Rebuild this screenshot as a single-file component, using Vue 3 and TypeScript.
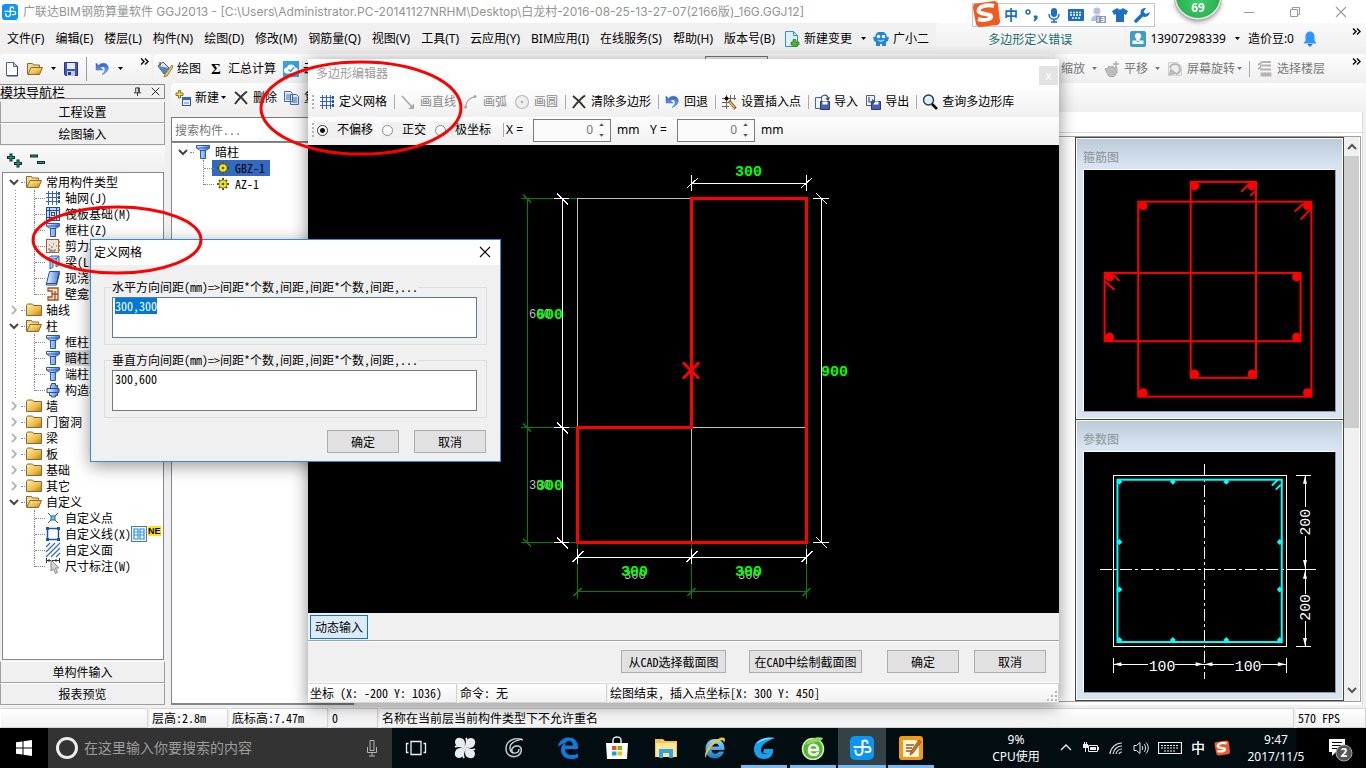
<script setup lang="ts">
import { onMounted, ref } from 'vue'

interface TreeItem { label: string; icon: string; selected?: boolean; badge?: boolean }
interface TreeGroup { label: string; open: boolean; items: TreeItem[] }
interface Tool { label: string; icon: string; disabled?: boolean; sep?: boolean }

const menus = ['文件(F)', '编辑(E)', '楼层(L)', '构件(N)', '绘图(D)', '修改(M)', '钢筋量(Q)', '视图(V)', '工具(T)', '云应用(Y)', 'BIM应用(I)', '在线服务(S)', '帮助(H)', '版本号(B)']

const groups: TreeGroup[] = [
  { label: '常用构件类型', open: true, items: [
    { label: '轴网(J)', icon: 'axis' },
    { label: '筏板基础(M)', icon: 'raft' },
    { label: '框柱(Z)', icon: 'column' },
    { label: '剪力墙(Q)', icon: 'wall' },
    { label: '梁(L)', icon: 'beam' },
    { label: '现浇板(B)', icon: 'slab' },
    { label: '壁龛', icon: 'niche' },
  ] },
  { label: '轴线', open: false, items: [] },
  { label: '柱', open: true, items: [
    { label: '框柱(Z)', icon: 'column' },
    { label: '暗柱(Z)', icon: 'column', selected: true },
    { label: '端柱(Z)', icon: 'column' },
    { label: '构造柱(Z)', icon: 'tie' },
  ] },
  { label: '墙', open: false, items: [] },
  { label: '门窗洞', open: false, items: [] },
  { label: '梁', open: false, items: [] },
  { label: '板', open: false, items: [] },
  { label: '基础', open: false, items: [] },
  { label: '其它', open: false, items: [] },
  { label: '自定义', open: true, items: [
    { label: '自定义点', icon: 'point' },
    { label: '自定义线(X)', icon: 'polyline', badge: true },
    { label: '自定义面', icon: 'area' },
    { label: '尺寸标注(W)', icon: 'dimension' },
  ] },
]

const editorTools: Tool[] = [
  { label: '定义网格', icon: 'axis', sep: true },
  { label: '画直线', icon: 'line', disabled: true },
  { label: '画弧', icon: 'arc', disabled: true },
  { label: '画圆', icon: 'circle', disabled: true, sep: true },
  { label: '清除多边形', icon: 'cross', sep: true },
  { label: '回退', icon: 'undo', sep: true },
  { label: '设置插入点', icon: 'insert', sep: true },
  { label: '导入', icon: 'import' },
  { label: '导出', icon: 'export', sep: true },
  { label: '查询多边形库', icon: 'search' },
]

const modes = ['不偏移', '正交', '极坐标']
const mode = ref('不偏移')
const offsetX = ref(0)
const offsetY = ref(0)
const horizontal = ref('300,300')
const vertical = ref('300,600')
const horizontalBox = ref<HTMLTextAreaElement | null>(null)

const gridX = [577.5, 691.5, 806.5]
const gridY = [198.5, 427.5, 542.5]

const stirrupDots: [number, number][] = [
  [1195, 185], [1253, 185], [1195, 375], [1253, 375],
  [1143, 205], [1309, 205], [1143, 394], [1309, 394],
  [1109, 277], [1298, 277], [1109, 338], [1298, 338],
]
const barMarks: [number, number][] = [
  [1119, 481], [1173, 481], [1227, 481], [1119, 641], [1173, 641], [1227, 641], [1281, 641],
  [1119, 542], [1119, 590], [1281, 542], [1281, 590],
]

const pinned = [
  { name: '任务视图', icon: 'taskview', state: '' },
  { name: '风扇', icon: 'fan', state: '' },
  { name: '漩涡', icon: 'swirl', state: '' },
  { name: 'Edge', icon: 'edge', state: 'apart' },
  { name: '应用商店', icon: 'store', state: '' },
  { name: '文件资源管理器', icon: 'explorer', state: '' },
  { name: 'Internet Explorer', icon: 'ie', state: '' },
  { name: '广联达', icon: 'gcloud', state: 'running' },
  { name: '浏览器', icon: 'browser', state: 'running' },
  { name: '钢筋算量', icon: 'rebar', state: 'active' },
  { name: '记事', icon: 'notes', state: 'running' },
]

onMounted(() => {
  horizontalBox.value?.focus()
  horizontalBox.value?.select()
})
</script>

<template>
  <div class="desktop">
    <svg class="defs" width="0" height="0" aria-hidden="true">
      <defs>
        <linearGradient id="gFolder" x1="0" y1="0" x2="1" y2="1"><stop offset="0" stop-color="#fff0b0" /><stop offset=".6" stop-color="#eebb4a" /><stop offset="1" stop-color="#b97a14" /></linearGradient>
        <linearGradient id="gBlue" x1="0" y1="0" x2="1" y2="0"><stop offset="0" stop-color="#f4f9ff" /><stop offset="1" stop-color="#3c78d8" /></linearGradient>
        <linearGradient id="gUndo" x1="0" y1="0" x2="0" y2="1"><stop offset="0" stop-color="#2a5fc4" /><stop offset="1" stop-color="#8ab8f4" /></linearGradient>
        <radialGradient id="gBall" cx=".5" cy=".6" r=".6"><stop offset="0" stop-color="#3ed06a" /><stop offset="1" stop-color="#25a548" /></radialGradient>
        <linearGradient id="gIe" x1="0" y1="0" x2="0" y2="1"><stop offset="0" stop-color="#8fdcff" /><stop offset="1" stop-color="#1477c8" /></linearGradient>
      </defs>
      <symbol id="rebar" viewBox="0 0 24 24"><rect width="24" height="24" rx="5" fill="#0a96f5" /><path d="M12.500 5v10.500a3.500 3.500 0 0 1-7 0v-1M4.500 11h13.500a2.500 2.500 0 0 1 0 5h-2.500M12.500 7a2.500 2.500 0 0 1 5 0" fill="none" stroke="#fff" stroke-width="2" stroke-linecap="round" /></symbol>
      <symbol id="newfile" viewBox="0 0 16 16"><path d="M2.500 1.500h7l4 4v9h-11z" fill="#fff" stroke="#4a6488" /><path d="M9.500 1.500v4h4z" fill="#bcd2ee" stroke="#4a6488" /><path d="M13.500 6v9H3" fill="none" stroke="#30486c" /></symbol>
      <symbol id="folder" viewBox="0 0 16 16"><path d="M.5 3.500l1-1.500h5l1 1.500h8v10H.5z" fill="url(#gFolder)" stroke="#8a6b2c" /></symbol>
      <symbol id="folderopen" viewBox="0 0 16 16"><path d="M.5 13V2.500h5l1 1.500h6V6" fill="#f6d98a" stroke="#8a6b2c" /><path d="M.8 13.500L4 6.500h11.500l-3 7z" fill="url(#gFolder)" stroke="#8a6b2c" /></symbol>
      <symbol id="save" viewBox="0 0 16 16"><path d="M1.500 1.500h13v13h-12l-1-1z" fill="#4355b8" stroke="#26348c" /><rect x="4" y="2" width="8" height="6" fill="#e4e9fa" /><rect x="4" y="10" width="8" height="5" fill="#c2cae8" /><rect x="5" y="11" width="3" height="3" fill="#26348c" /></symbol>
      <symbol id="undo" viewBox="0 0 16 16"><path d="M2 2v7h7L6.500 6.800C8.500 5 11 5.500 11 8.200c0 2-1.200 3.800-3 5.300 4.500-1.500 6.500-4.200 6.300-7C14 2 8 .5 4.500 4.600z" fill="url(#gUndo)" stroke="#3a6cc4" stroke-width=".5" /></symbol>
      <symbol id="paint" viewBox="0 0 16 16"><path d="M1 5l5-4 6 6-5 6z" fill="#dfe8f2" stroke="#3d4e66" /><path d="M1 5l11 2-5 6z" fill="#5087c6" /><path d="M15 4L8 13l-1 3 3-1 6-9z" fill="#f1c550" stroke="#6f582b" stroke-width=".7" /><path d="M3 1v4" stroke="#26384c" /></symbol>
      <symbol id="cloud" viewBox="0 0 16 16"><rect width="16" height="16" fill="#35a1e3" /><path d="M4 12.500a3 3 0 0 1 0-6 4.200 4.200 0 0 1 8 0 3 3 0 0 1 0 6z" fill="#fff" /><path d="M5.500 8.500l2 2 3.500-4" fill="none" stroke="#35a1e3" stroke-width="1.500" /></symbol>
      <symbol id="axis" viewBox="0 0 16 16"><path d="M1 3.500h14M1 7.500h14M1 11.500h14M3.500 1v14M7.500 1v14M11.500 1v14" stroke="#3464bd" shape-rendering="crispEdges" /><path d="M13 3.500h2M13 7.500h2M13 11.500h2" stroke="#2a58b0" stroke-width="3" stroke-dasharray="2 1" /></symbol>
      <symbol id="raft" viewBox="0 0 16 16"><rect x="1.500" y="1.500" width="13" height="13" fill="#c7dbf6" stroke="#1d4f93" /><path d="M1 4.500h14M1 11.500h14M4.500 1v14M11.500 1v14" stroke="#1d4f93" /><rect x="6.500" y="6.500" width="3" height="3" fill="#fff" stroke="#1d4f93" /></symbol>
      <symbol id="column" viewBox="0 0 16 16"><path d="M1.500 1.500h13V4l-3 2h-1v8.500h-5V6h-1l-3-2z" fill="url(#gBlue)" stroke="#2358b8" /><path d="M1.500 4h13M5 6.500h6" stroke="#2358b8" /></symbol>
      <symbol id="wall" viewBox="0 0 16 16"><rect x="1.500" y="1.500" width="12" height="13" fill="#eee4de" stroke="#a35d35" /><path d="M3 11h2M6 9h2M9 12h2M4 7h1M8 6h1M11 8h1M4 13h6M5 12h2" stroke="#6e6058" /><path d="M13 4h2M13 8h2M13 12h2" stroke="#c26f2c" stroke-width="2" /></symbol>
      <symbol id="beam" viewBox="0 0 16 16"><path d="M2 5l4-3h8l-3 3zM5 6v9l3-2V6M11 5v8l3-2V2" fill="#a9cdf4" stroke="#2b68b7" /></symbol>
      <symbol id="slab" viewBox="0 0 16 16"><path d="M4.500 1.500h10l-3 12h-10z" fill="url(#gBlue)" stroke="#1d51a9" /><path d="M1.500 13.500v1.500h10l3-12" fill="none" stroke="#16407f" /></symbol>
      <symbol id="niche" viewBox="0 0 16 16"><path d="M3 2h10v12H3v-3h4V5H3zM7 8h6M10 5v9" fill="#f5dec8" stroke="#a15423" stroke-width="1.300" /></symbol>
      <symbol id="tie" viewBox="0 0 16 16"><path d="M5.500 3.500h1v-2h4v2h2v3h1.500v4h-1.500v3h-2v1.500h-4v-1.500h-2v-3H2v-4h3.500z" fill="url(#gBlue)" stroke="#254d91" /><path d="M5 6.500h7M5 10.500h7" stroke="#254d91" /></symbol>
      <symbol id="point" viewBox="0 0 16 16"><path d="M3 3l10 10M13 3L3 13" stroke="#1c5fae" /><rect x="6" y="6" width="4" height="4" fill="#8bc0f0" stroke="#1c5fae" /></symbol>
      <symbol id="polyline" viewBox="0 0 16 16"><rect x="2.500" y="2.500" width="11" height="11" fill="none" stroke="#1b55ad" stroke-width="1.500" /><path d="M1 1h3v3H1zM12 1h3v3h-3zM1 12h3v3H1zM12 12h3v3h-3z" fill="#1b55ad" /></symbol>
      <symbol id="area" viewBox="0 0 16 16"><path d="M1 5l4-4M1 10l9-9M1 15L15 1M6 15l9-9M11 15l4-4" stroke="#3169c8" stroke-width="1.200" /></symbol>
      <symbol id="dimension" viewBox="0 0 16 16"><path d="M1 2.500h14M1.500 0v5M14.500 0v5M4 1v3M11 1v3" stroke="#333" /><path d="M6 2v11l2.500-2 2 4.500 2-1-2-4.500h3.500z" fill="#d4d4d4" stroke="#888" /></symbol>
      <symbol id="gear" viewBox="0 0 12 12"><path d="M6 0v12M0 6h12M2 2l8 8M10 2l-8 8" stroke="#5d5600" stroke-width="2" /><circle cx="6" cy="6" r="4" fill="#f3e522" stroke="#6e6600" stroke-width=".6" /><circle cx="6" cy="6" r="1.300" fill="#504a00" /></symbol>
      <symbol id="line" viewBox="0 0 16 16"><path d="M2 2l10 11" stroke="#a6a6a6" stroke-width="1.500" /><path d="M14 15V9.500L8.500 15z" fill="#a6a6a6" /></symbol>
      <symbol id="arc" viewBox="0 0 16 16"><path d="M2.500 13C3 8 6 4 12 2.500" fill="none" stroke="#a6a6a6" stroke-width="1.200" /><circle cx="2.500" cy="13" r="1.500" fill="#a6a6a6" /><circle cx="12" cy="2.500" r="1.500" fill="#a6a6a6" /></symbol>
      <symbol id="circle" viewBox="0 0 16 16"><circle cx="8" cy="8" r="6.500" fill="#eee" stroke="#bbb" stroke-width="1.200" /><circle cx="8" cy="8" r="1.200" fill="#aaa" /></symbol>
      <symbol id="cross" viewBox="0 0 16 16"><path d="M2 2c4 3 8 7 12 12M14 1.500C9 5 5 10 2 14" stroke="#333" stroke-width="2" fill="none" /></symbol>
      <symbol id="insert" viewBox="0 0 16 16"><path d="M1 4.500h14M1 8.500h9M5.500 1v14M9.500 1v7M13.500 1v5M1 12.500h7" stroke="#666" /><circle cx="5.500" cy="4.500" r="2" fill="#111" /><path d="M8 7l6.500 7.500" stroke="#8f5524" stroke-width="3" /><path d="M8.500 8l5 5.500" stroke="#f2c466" stroke-width="1.300" /></symbol>
      <symbol id="import" viewBox="0 0 16 16"><path d="M1.500 3.500h6v11h-6z" fill="#edf4fd" stroke="#46648d" /><path d="M6.500 7.500h9v8h-9z" fill="#4760b6" stroke="#29387f" /><path d="M8.500 7.500h5v3h-5z" fill="#fff" /><path d="M7 4c1-3 5-4 7-1v3M12 4l2 2 1.500-2.500" fill="none" stroke="#364e75" stroke-width="1.200" /></symbol>
      <symbol id="export" viewBox="0 0 16 16"><path d="M1.500 1.500h8v10h-8z" fill="#edf4fd" stroke="#46648d" /><path d="M6.500 7.500h9v8h-9z" fill="#4760b6" stroke="#29387f" /><path d="M8.500 7.500h5v3h-5z" fill="#fff" /><path d="M4 3v5h5M7 5.500L9.500 8 7 10" fill="none" stroke="#364e75" stroke-width="1.200" /></symbol>
      <symbol id="search" viewBox="0 0 16 16"><circle cx="6.500" cy="6" r="5" fill="#d6effb" stroke="#2c3c48" stroke-width="1.400" /><path d="M4 5a3 3 0 0 1 3-2" stroke="#fff" fill="none" /><path d="M10 10l5 5" stroke="#111" stroke-width="2.600" /></symbol>
      <symbol id="hand" viewBox="0 0 16 16"><path d="M1 8l3-1 1-2 2 1 2-1 1 2 2-1 1 2v4l-3 3.500H5L3 12z" fill="#bdbdbd" stroke="#a8a8a8" /><path d="M12 0v7M9 3h6" stroke="#aaa" stroke-width="1.300" /></symbol>
      <symbol id="rotate" viewBox="0 0 16 16"><path d="M1.500 1.500h9l4 4v9h-13z" fill="#ededed" stroke="#d0d0d0" /><path d="M3 7a5 5 0 1 1 6 6M3 13l1-4 4 3z" fill="none" stroke="#b4b4b4" stroke-width="1.800" /></symbol>
      <symbol id="floors" viewBox="0 0 16 16"><path d="M1 4l4-3h9M3 4.500h11M1 8l3-2M3 8.500h11M4.500 12.500h9v2h-9z" fill="none" stroke="#b4b4b4" stroke-width="1.800" /></symbol>
      <symbol id="newcomp" viewBox="0 0 16 16"><path d="M3.500 .5h2v2.500h2.500v2.500h-2.500v2.500h-2V5.500H1V3h2.500z" fill="#f3da3c" stroke="#83742a" /><rect x="7.500" y="7.500" width="8" height="8" fill="#e9f2ff" stroke="#2a56a6" /><path d="M7 7h9v3H7z" fill="#2f67c9" /><path d="M9 13h5" stroke="#5d87cc" /></symbol>
      <symbol id="copy" viewBox="0 0 16 16"><path d="M.500 1.500h6l2 2v8h-8zM6.500 4.500h6l2 2v8h-8z" fill="#e2edfb" stroke="#3e6aae" /><path d="M2 5h4M2 7h4M2 9h4M8 8h5M8 10h5M8 12h5" stroke="#3e6aae" /></symbol>
      <symbol id="fileplus" viewBox="0 0 16 16"><path d="M1.500.5h8l4 4v11h-12z" fill="#dff0fd" stroke="#3b8ec9" /><path d="M9.500.500v4h4" fill="none" stroke="#3b8ec9" /><path d="M9 8.500h3v2.500h3v3h-3v2H9v-2H7v-3h2z" fill="#4db31e" stroke="#2d7d0c" stroke-width=".7" /></symbol>
      <symbol id="robot" viewBox="0 0 16 16"><path d="M3 3l2-2h6l2 2 1 3h2l-1 4-2 1v4H9v-2H7v2H3v-4l-2-1L0 6h2z" fill="#2088dc" /><circle cx="5.500" cy="5.500" r="1.700" fill="#fff" /><circle cx="10.500" cy="5.500" r="1.700" fill="#fff" /><path d="M5 9c2 1.500 4 1.500 6 0" stroke="#fff" fill="none" /></symbol>
      <symbol id="user" viewBox="0 0 16 16"><rect width="16" height="16" rx="2" fill="#3f9cc9" /><path d="M8 2a3 3 0 0 1 2.500 5L9 9.500h4.500V13h-11V9.500H7L5.500 7A3 3 0 0 1 8 2z" fill="#fff" /><path d="M6.500 10l1.500 1.500L9.500 10z" fill="#3f9cc9" /></symbol>
      <symbol id="bell" viewBox="0 0 16 16"><path d="M8 .5c3 0 4.500 2.500 4.500 5v4l2 3h-13l2-3v-4c0-2.500 1.500-5 4.500-5z" fill="#3294ff" /><path d="M6 13.500h4l-2 2z" fill="#3294ff" stroke="#2274ce" /></symbol>
      <symbol id="sogou" viewBox="0 0 28 28"><path d="M2 4l20-3q3 0 4 3l2 17q0 3-3 4L8 27q-3 0-4-3L1 8q0-3 1-4z" fill="#f25a21" /><path d="M22 6q-7-2-13 1-5 4 0 6l9 2q3 2-1 4-5 2-11 0" fill="none" stroke="#fff" stroke-width="4" /></symbol>
      <symbol id="pin" viewBox="0 0 10 10"><path d="M3 1v5M7 1v5M3 1h4M1 6.500h8M5 6v4M6 1v5" stroke="#222" fill="none" /></symbol>
      <symbol id="close" viewBox="0 0 12 12"><path d="M1 1l10 10M11 1L1 11" stroke="currentColor" stroke-width="1.100" /></symbol>
      <symbol id="chevdown" viewBox="0 0 10 10"><path d="M1 3l4 4 4-4" fill="none" stroke="currentColor" stroke-width="2" /></symbol>
      <symbol id="chevright" viewBox="0 0 10 10"><path d="M3 1l4 4-4 4" fill="none" stroke="#a6a6a6" stroke-width="1.500" /></symbol>
      <symbol id="more" viewBox="0 0 9 7"><path d="M1 .5l3 3-3 3M5 .5l3 3-3 3" fill="none" stroke="#111" stroke-width="1.500" /></symbol>
      <symbol id="table" viewBox="0 0 16 16"><rect x=".5" y=".5" width="15" height="15" fill="#e9f7ff" stroke="#66757e" /><path d="M3 3h4v10H3zM9 3h4v10H9zM3 6h4M3 9h4M9 6h4M9 9h4" fill="#fff" stroke="#2b8fdf" stroke-width="1.200" /></symbol>
      <symbol id="taskview" viewBox="0 0 24 24"><path d="M7 5.500h10v13H7zM4.500 7.500h-2v9h2M19.500 7.500h2v9h-2" fill="none" stroke="#eee" stroke-width="1.300" /></symbol>
      <symbol id="fan" viewBox="0 0 24 24"><g fill="#e8ecec"><path id="blade" d="M11.500 11C6 11.500 2 10 2 6s4-5 7-3.500 3.500 4 2.500 8.500z" /><use href="#blade" transform="rotate(90 12 12)" /><use href="#blade" transform="rotate(180 12 12)" /><use href="#blade" transform="rotate(270 12 12)" /></g><path d="M12 12C8 10 5 9 2 11M12 12c2-4 3-7 1-10M12 12c4 2 7 3 10 1M12 12c-2 4-3 7-1 10" fill="none" stroke="#e8ecec" stroke-width="2" /></symbol>
      <symbol id="swirl" viewBox="0 0 24 24"><path d="M21 4C13 1 4 4 4 13c0 6 6 9 11 7s6-9 1-10-8 4-5 7" fill="none" stroke="#b9c3c6" stroke-width="1.600" /><path d="M20 3C13 5 7 7 8 13c1 6 9 5 9 0" fill="none" stroke="#dce2e4" stroke-width="1.300" /></symbol>
      <symbol id="edge" viewBox="0 0 24 24"><path d="M2 11C3 4 8 1.500 13 1.500c6 0 9.500 4.500 9 11.500H9c0 4 3 6 7 6 2 0 4-.5 6-1.500v4c-2 1-4.500 1.500-7 1.500-6 0-10-4-10-9 0-3 1.500-5.500 4-7-2 .5-5 2-7 4zM9 9.500h8c0-3-1.500-4.500-4-4.500s-4 2-4 4.500z" fill="#0a7cdf" fill-rule="evenodd" /></symbol>
      <symbol id="store" viewBox="0 0 24 24"><path d="M1 7h22l-1 16H2z" fill="#fff" /><path d="M8 7V4a4 3 0 0 1 8 0v3" fill="none" stroke="#e8e8e8" stroke-width="1.500" /><path d="M7 10h4.500v4H7z" fill="#f25022" /><path d="M12.500 10H17v4h-4.500z" fill="#7fba00" /><path d="M7 15.500h4.500v4H7z" fill="#00a4ef" /><path d="M12.500 15.500H17v4h-4.500z" fill="#ffb900" /></symbol>
      <symbol id="explorer" viewBox="0 0 24 24"><path d="M1 3h8l2 2h12v16H1z" fill="#f5c44f" /><path d="M2 7h20v14H2z" fill="#fde796" /><path d="M5 13h14v9h-4v-5H9v5H5z" fill="#30a5de" /></symbol>
      <symbol id="ie" viewBox="0 0 24 24"><path d="M12 3c6 0 10 4 9.500 11H8.500c.5 4 5.500 5 7.500 1.500h5C19 21 15 22.500 12 22.500c-6 0-9.500-4-9.500-9.500S6 3 12 3zM8.500 10.500h7.500c-.5-4-7-4-7.500 0z" fill="url(#gIe)" fill-rule="evenodd" /><path d="M3 22C-1 18 8 5 17 2c5-1.500 6 1 4 5 0-4-3-3-7-1C8 10 3 17 3 22z" fill="#f4c62c" /></symbol>
      <symbol id="gcloud" viewBox="0 0 24 24"><path d="M23 2C13 0 2 4 2 13c0 6 4 10 10 10s10-4 9-10h-9l-1 4h4c-2 2-6 1-6-3 0-6 7-9 14-12z" fill="#18a2ee" /><path d="M4 8C8 2 16 1 23 2c-8 1-14 3-19 6z" fill="#7dd8ff" /></symbol>
      <symbol id="browser" viewBox="0 0 24 24"><circle cx="12" cy="13" r="10.500" fill="#57b82e" stroke="#d6efc8" stroke-width="1.500" /><path d="M17 16c-1 4-9 4-9-2 0-7 9-7 9 0H8" fill="none" stroke="#fff" stroke-width="2.600" /><path d="M4 9C9 2 17 0 22 2c-1 4-7 3-18 7z" fill="#8ddd55" /></symbol>
      <symbol id="notes" viewBox="0 0 24 24"><rect width="24" height="24" rx="3" fill="#f39a13" /><path d="M4 4h13l3 3v14H4z" fill="#fff4d8" /><path d="M7 9h8M7 12h6M7 15h5" stroke="#8c5b27" stroke-width="1.500" /><path d="M20 4L12 15l-1 4 3-2 8-11z" fill="#c8722b" stroke="#774313" stroke-width=".7" /></symbol>
    </svg>

    <main class="app">
      <header class="titlebar">
        <svg class="logo"><use href="#rebar" /></svg>
        <h1>广联达BIM钢筋算量软件 GGJ2013 - [C:\Users\Administrator.PC-20141127NRHM\Desktop\白龙村-2016-08-25-13-27-07(2166版)_16G.GGJ12]</h1>
        <div class="wincontrols">
          <button aria-label="最小化"><svg viewBox="0 0 12 12"><path d="M1 6.500h10" stroke="#999" /></svg></button>
          <button aria-label="还原"><svg viewBox="0 0 12 12"><path d="M1.500 3.500h7v7h-7zM3.500 3V1.500h7v7H9" fill="none" stroke="#999" /></svg></button>
          <button aria-label="关闭"><svg><use href="#close" /></svg></button>
        </div>
      </header>

      <nav class="menubar">
        <button v-for="m in menus" :key="m">{{ m }}</button>
        <button class="withicon changes"><svg><use href="#fileplus" /></svg>新建变更<i class="caret"></i></button>
        <button class="withicon assistant"><svg><use href="#robot" /></svg>广小二</button>
        <p class="notice song">多边形定义错误</p>
        <div class="account">
          <button class="withicon"><svg><use href="#user" /></svg>13907298339<i class="caret"></i></button>
          <span>造价豆:0</span>
          <svg class="ic"><use href="#bell" /></svg>
          <svg class="more"><use href="#more" /></svg>
        </div>
      </nav>

      <div class="toolrow">
        <div class="toolbar files">
          <button aria-label="新建"><svg><use href="#newfile" /></svg></button>
          <button aria-label="打开"><svg><use href="#folderopen" /></svg><i class="caret"></i></button>
          <button aria-label="保存"><svg><use href="#save" /></svg></button>
          <i class="vline"></i>
          <button aria-label="撤销"><svg><use href="#undo" /></svg><i class="caret wide"></i></button>
          <svg class="more"><use href="#more" /></svg>
        </div>
        <div class="toolbar draw">
          <button><svg><use href="#paint" /></svg>绘图</button>
          <button><b class="sigma">Σ</b>汇总计算</button>
          <button><svg><use href="#cloud" /></svg>云检查</button>
          <select class="floor" aria-label="楼层"><option></option></select>
        </div>
        <div class="toolbar view">
          <button disabled>缩放<i class="caret"></i></button>
          <button disabled><svg><use href="#hand" /></svg>平移<i class="caret"></i></button>
          <button disabled><svg><use href="#rotate" /></svg>屏幕旋转<i class="caret near"></i></button>
          <i class="vline"></i>
          <button disabled><svg><use href="#floors" /></svg>选择楼层</button>
          <svg class="more"><use href="#more" /></svg>
        </div>
      </div>

      <div class="workspace">
        <aside class="navigator song">
          <header><span>模块导航栏</span><svg><use href="#pin" /></svg><svg><use href="#close" /></svg></header>
          <button class="section">工程设置</button>
          <button class="section">绘图输入</button>
          <div class="expander">
            <svg viewBox="0 0 40 16"><path d="M1 5.500h8M5 1.500v8M8 11.500h8M12 7.500v8M24 4h8M31 10.500h8" stroke="#0a2e2b" stroke-width="3" /><path d="M2 5.500h6M5 2.500v6M9 11.500h6M12 8.500v6M25 4h6M32 10.500h6" stroke="#21998f" stroke-width="1.200" /></svg>
          </div>
          <ul class="tree">
            <li v-for="g in groups" :key="g.label">
              <div class="row">
                <svg class="tog"><use :href="g.open ? '#chevdown' : '#chevright'" /></svg>
                <i class="dots"></i>
                <svg class="ic"><use :href="g.open ? '#folderopen' : '#folder'" /></svg>
                <span>{{ g.label }}</span>
              </div>
              <ul v-if="g.items.length" :class="{ tail: g.label === '自定义' }">
                <li v-for="c in g.items" :key="c.label" class="row child">
                  <i class="branch"></i>
                  <svg class="ic"><use :href="'#' + c.icon" /></svg>
                  <span :class="{ chosen: c.selected }">{{ c.label }}</span>
                  <template v-if="c.badge"><svg class="ic"><use href="#table" /></svg><b class="new">NE</b></template>
                </li>
              </ul>
            </li>
          </ul>
          <button class="section">单构件输入</button>
          <button class="section">报表预览</button>
        </aside>

        <section class="stage">
          <div class="toolbar comps">
            <button><svg><use href="#newcomp" /></svg>新建<i class="caret near"></i></button>
            <button><svg><use href="#cross" /></svg>删除</button>
            <button><svg><use href="#copy" /></svg>复制</button>
          </div>
          <div class="panes">
            <div class="components song">
              <input type="search" placeholder="搜索构件..." aria-label="搜索构件" />
              <ul class="tree">
                <li>
                  <div class="row"><svg class="tog"><use href="#chevdown" /></svg><i class="dots"></i><svg class="ic"><use href="#column" /></svg><span>暗柱</span></div>
                  <ul class="tail">
                    <li class="row child"><i class="branch"></i><span class="hot"><svg class="mini"><use href="#gear" /></svg>GBZ-1</span></li>
                    <li class="row child"><i class="branch"></i><span class="hotless"><svg class="mini"><use href="#gear" /></svg>AZ-1</span></li>
                  </ul>
                </li>
              </ul>
            </div>
            <div class="preview">
              <div class="dock">
                <div class="figures">
                  <figure>
                    <figcaption>箍筋图</figcaption>
                    <svg viewBox="1084 169 252 243">
                      <g fill="none" stroke="#f00" stroke-width="2">
                        <rect x="1191" y="181" width="66" height="198" />
                        <rect x="1138" y="201" width="175" height="197" />
                        <rect x="1104" y="273" width="198" height="69" />
                        <path d="M1242 191l8-8M1251 195l6-5M1296 211l9-8M1302 219l11-11M1119 281l-6-6M1114 290l-9-8" />
                      </g>
                      <circle v-for="(d, i) in stirrupDots" :key="i" :cx="d[0]" :cy="d[1]" r="4.500" fill="#f00" />
                    </svg>
                  </figure>
                  <figure>
                    <figcaption>参数图</figcaption>
                    <svg viewBox="1084 451 252 243">
                      <g fill="none" stroke="#fff" shape-rendering="crispEdges">
                        <rect x="1112.500" y="474.500" width="175" height="173" />
                        <path d="M1204.500 463v217M1099 569.500h219" stroke-dasharray="12 3 3 3" />
                        <path d="M1112.500 659v15M1287.500 659v15M1112 665.500h36M1175 665.500h60M1262 665.500h25" />
                        <path d="M1297 474.500h16M1297 647.500h16M1299 569.500h14M1306.500 475v32M1306.500 536v58M1306.500 622v25" />
                      </g>
                      <path d="M1113 665.500l8-2v4zM1204 665.500l-8-2v4zM1205 665.500l8-2v4zM1287 665.500l-8-2v4zM1306.500 475l-2 8h4zM1306.500 568l-2-8h4zM1306.500 571l-2 8h4zM1306.500 647l-2-8h4z" fill="#fff" />
                      <rect x="1117" y="479" width="166" height="164" fill="none" stroke="#0ff" stroke-width="2" />
                      <path d="M1273 485l6-6M1277 489l5-5" stroke="#0ff" stroke-width="2" />
                      <path v-for="(d, i) in barMarks" :key="i" :d="`M${d[0]} ${d[1] - 3}l3 3-3 3-3-3z`" fill="#0ff" />
                      <g class="dimtext" fill="#fff" text-anchor="middle">
                        <text x="1162" y="672">100</text>
                        <text x="1249" y="672">100</text>
                        <text transform="translate(1312 522) rotate(-90)">200</text>
                        <text transform="translate(1312 608) rotate(-90)">200</text>
                      </g>
                    </svg>
                  </figure>
                </div>
                <div class="scroll"><svg class="up"><use href="#chevdown" /></svg><i></i><svg><use href="#chevdown" /></svg></div>
              </div>
            </div>
          </div>
        </section>
      </div>

      <footer class="status song">
        <span class="c1"></span><span class="c2">层高:2.8m</span><span class="c3">底标高:7.47m</span><span class="c4">0</span><span class="c5">名称在当前层当前构件类型下不允许重名</span><span class="c6">570 FPS</span>
      </footer>
    </main>

    <footer class="taskbar">
      <button class="start" aria-label="开始"><svg viewBox="0 0 16 16"><path d="M0 2.300L6.500 1.400v6.100H0zM7.500 1.200L16 0v7.500H7.500zM0 8.500h6.500v6.100L0 13.700zM7.500 8.500H16V16l-8.500-1.200z" fill="#fff" /></svg></button>
      <label class="cortana">
        <i class="ring"></i>
        <input type="text" placeholder="在这里输入你要搜索的内容" aria-label="搜索" />
        <svg viewBox="0 0 12 18"><path d="M4 1.500h4v10H4zM1.500 8v5.500h9V8M6 14v3M3 17h6" fill="none" stroke="#b5b5b5" /></svg>
      </label>
      <div class="pins">
        <button v-for="p in pinned" :key="p.icon" :class="p.state" :aria-label="p.name"><svg><use :href="'#' + p.icon" /></svg></button>
      </div>
      <div class="cpu"><span>9%</span><span>CPU使用</span></div>
      <div class="tray">
        <svg viewBox="0 0 16 16"><path d="M3 10l5-5 5 5" fill="none" stroke="#eee" stroke-width="1.300" /></svg>
        <svg viewBox="0 0 16 16"><path d="M5.500 5.500h9v6h-9z" fill="none" stroke="#eee" /><path d="M7 7h6v3H7zM15 7h1v3h-1zM0 4h5v4H3v4H2V8H0zM1 2h1v2H1zM3 2h1v2H3z" fill="#eee" /></svg>
        <svg viewBox="0 0 16 16"><path d="M2 14A12 12 0 0 1 14 3M5 14a9 9 0 0 1 9-8M8 14a6 6 0 0 1 6-5M11 14a3 3 0 0 1 3-2" fill="none" stroke="#ddd" stroke-width="1.200" /></svg>
        <svg viewBox="0 0 16 16"><path d="M1 5.500h2.500L7 2.500v11l-3.500-3H1zM9 6c1 1 1 3 0 4M11 4c2 2 2 6 0 8M13 2.500c3 3 3 8 0 11" fill="none" stroke="#eee" /></svg>
        <svg class="kb" viewBox="0 0 24 16"><path d="M.500 2.500h23v11H.500z" fill="none" stroke="#eee" stroke-width="1.200" /><path d="M3 5.500h18M3 8h18M6 11h12" stroke="#eee" stroke-width="1.200" stroke-dasharray="2 1" /></svg>
        <b>中</b>
        <svg><use href="#sogou" /></svg>
      </div>
      <time class="clock"><span>9:47</span><span>2017/11/5</span></time>
      <button class="center" aria-label="通知"><svg viewBox="0 0 26 26"><path d="M2 3h16v13H9l-4 4v-4H2z" fill="#fff" /><path d="M5 6.500h10M5 9.500h10M5 12.500h6" stroke="#000" /><circle cx="17" cy="17" r="8" fill="#555" stroke="#aaa" /><text x="17" y="21" text-anchor="middle" fill="#fff" class="count">2</text></svg></button>
    </footer>

    <section class="editor" aria-label="多边形编辑器">
      <header><h2>多边形编辑器</h2><button aria-label="关闭">x</button></header>
      <div class="etools">
        <i class="grip"></i>
        <template v-for="t in editorTools" :key="t.label">
          <button :disabled="t.disabled"><svg><use :href="'#' + t.icon" /></svg>{{ t.label }}</button>
          <i v-if="t.sep" class="esep"></i>
        </template>
      </div>
      <div class="etools offsets">
        <i class="grip"></i>
        <label v-for="m in modes" :key="m" class="radio"><input v-model="mode" type="radio" name="mode" :value="m" /><span>{{ m }}</span></label>
        <i class="esep"></i>
        <label for="offx">X =</label>
        <div class="spin"><input id="offx" v-model="offsetX" type="text" /><span><button aria-label="增加X" @click="offsetX++"></button><button aria-label="减少X" @click="offsetX--"></button></span></div>
        <em>mm</em>
        <label for="offy">Y =</label>
        <div class="spin"><input id="offy" v-model="offsetY" type="text" /><span><button aria-label="增加Y" @click="offsetY++"></button><button aria-label="减少Y" @click="offsetY--"></button></span></div>
        <em>mm</em>
      </div>
      <svg class="canvas" viewBox="308 145 751 468">
        <g fill="none" shape-rendering="crispEdges">
          <g stroke="#008000">
            <path d="M527.500 198v345M577 591.500h230" />
            <path v-for="y in gridY" :key="'a' + y" :d="`M521 ${y}h56M523 ${y - 4}l8 8`" />
            <path v-for="x in gridX" :key="'b' + x" :d="`M${x} 542v57M${x - 4} 596l8-8`" />
          </g>
          <path d="M577.500 427V198.500H691M691.500 427v115M691 427.500h115" stroke="#c0c0c0" />
          <g stroke="#fff">
            <path d="M562.500 198v345M577 557.500h230M691 183.500h116M821.500 198v345" />
            <path v-for="y in gridY" :key="'c' + y" :d="`M554 ${y}h15M557 ${y - 5}l11 11`" />
            <path v-for="x in gridX" :key="'d' + x" :d="`M${x} 549v15M${x - 5} 562l11-11`" />
            <path d="M691.500 175v16M806.500 175v16M687 188l11-10M801 188l11-10M813 198.500h16M816 193l11 11M813 542.500h16M816 537l11 11" />
          </g>
          <path d="M691.500 198.500h115v344h-229v-115h114z" stroke="#f00" stroke-width="3" />
        </g>
        <path d="M683 362.500l16 16M699 362.500l-16 16" stroke="#f00" stroke-width="3" />
        <g class="small" fill="#c0c0c0">
          <text x="529" y="318">600</text><text x="529" y="489">300</text>
          <text x="624" y="579">300</text><text x="738" y="579">300</text>
        </g>
        <g class="big" fill="#0f0">
          <text x="735" y="176">300</text><text x="536" y="319">600</text><text x="536" y="490">300</text>
          <text x="821" y="376">900</text><text x="621" y="576">300</text><text x="735" y="576">300</text>
        </g>
      </svg>
      <div class="dynamic song"><button>动态输入</button></div>
      <div class="actions song"><button class="w105">从CAD选择截面图</button><button class="w113">在CAD中绘制截面图</button><button>确定</button><button>取消</button></div>
      <footer class="estatus song"><span>坐标 (X: -200 Y: 1036)</span><span>命令: 无</span><span>绘图结束, 插入点坐标[X: 300 Y: 450]</span><svg class="resize" viewBox="0 0 12 12"><path d="M8 0h2v2H8zM4 4h2v2H4zM8 4h2v2H8zM0 8h2v2H0zM4 8h2v2H4zM8 8h2v2H8z" fill="#b8b8b8" /></svg></footer>
    </section>

    <form class="dialog song" aria-label="定义网格" @submit.prevent>
      <header><h2>定义网格</h2><button type="button" aria-label="关闭"><svg><use href="#close" /></svg></button></header>
      <fieldset>
        <legend><label for="hs">水平方向间距(mm)=&gt;间距*个数,间距,间距*个数,间距,...</label></legend>
        <textarea id="hs" ref="horizontalBox" v-model="horizontal" class="active" spellcheck="false"></textarea>
      </fieldset>
      <fieldset>
        <legend><label for="vs">垂直方向间距(mm)=&gt;间距*个数,间距,间距*个数,间距,...</label></legend>
        <textarea id="vs" v-model="vertical" spellcheck="false"></textarea>
      </fieldset>
      <div class="buttons"><button>确定</button><button type="button">取消</button></div>
    </form>

    <div class="ime">
      <svg class="badge"><use href="#sogou" /></svg>
      <b>中</b>
      <svg viewBox="0 0 16 16"><circle cx="4" cy="5" r="2" fill="none" stroke="#1b70c4" stroke-width="1.500" /><path d="M10 9h3q1 4-3 5 2-2 0-5z" fill="#1b70c4" stroke="#1b70c4" /></svg>
      <svg viewBox="0 0 16 16"><rect x="5" y="1" width="6" height="9" rx="3" fill="#1b70c4" /><path d="M3 7c0 7 10 7 10 0M8 12v3M5 15h6" fill="none" stroke="#1b70c4" stroke-width="1.500" /></svg>
      <svg viewBox="0 0 16 16"><rect y="2" width="16" height="12" rx="1" fill="#1b70c4" /><path d="M2 5.500h12M2 8h12M4 11h8" stroke="#fff" stroke-width="1.400" stroke-dasharray="2 1" /></svg>
      <svg viewBox="0 0 16 16"><circle cx="7" cy="4" r="3.500" fill="#b5c3d8" /><path d="M1 14c0-8 12-8 12 0z" fill="#b5c3d8" /><rect x="6" y="9" width="10" height="7" fill="#8e9db5" /><path d="M8 10v5M11 12.500h3M11.500 10.500h2.500v4h-2.500" stroke="#fff" fill="none" /></svg>
      <svg viewBox="0 0 16 16"><path d="M5 1q3 3 6 0l5 3-2 4-2-1v8H4V7L2 8 0 4z" fill="#1b70c4" /></svg>
      <svg viewBox="0 0 16 16"><path d="M2 14l7-7" stroke="#1b70c4" stroke-width="3.500" stroke-linecap="round" /><path d="M12 1a4.500 4.500 0 1 0 3.500 4L12 7 9.500 5z" fill="#1b70c4" /></svg>
    </div>
    <div class="ball"><svg viewBox="0 0 52 26"><circle cx="26" cy="-4" r="23" fill="url(#gBall)" stroke="#e4e4e4" stroke-width="2" /><circle cx="26" cy="-4" r="24" fill="none" stroke="#999" stroke-width=".6" /><text x="26" y="12" text-anchor="middle" fill="#fff">69</text></svg></div>

    <svg class="marks" viewBox="0 0 480 290" width="480" height="290" fill="none" stroke="#f00" stroke-width="3"><ellipse cx="361" cy="108" rx="100" ry="46" /><ellipse cx="117" cy="240" rx="84" ry="33" /></svg>
  </div>
</template>

<style>
html, body { margin: 0; background: #000; }
</style>

<style scoped>
.desktop { position: relative; display: flex; flex-direction: column; min-height: 100vh; overflow: hidden; font: 12px/16px "Noto Sans", "Noto Sans CJK SC", sans-serif; color: #000; }
.desktop * { box-sizing: border-box; }
.defs { position: absolute; }
.song { font-family: "Noto Sans CJK SC", sans-serif; font-feature-settings: "hwid"; }
button, input, select, textarea { font: inherit; font-feature-settings: inherit; color: inherit; margin: 0; padding: 0; border: 0; background: none; border-radius: 0; }
button { white-space: nowrap; flex: none; }
h1, h2, p, ul, figure, fieldset { margin: 0; padding: 0; list-style: none; }
h1, h2 { font-size: 12px; font-weight: 400; }
svg { flex: none; display: block; }
.app { flex: 1; display: flex; flex-direction: column; background: #f0f0f0; }

.titlebar { display: flex; align-items: center; height: 23px; padding: 0 14px 0 2px; background: #fff; }
.titlebar .logo { width: 16px; height: 16px; margin-right: 5px; }
.titlebar h1 { flex: 1; color: #949494; white-space: nowrap; font-family: Inter, "Noto Sans CJK SC", sans-serif; }
.wincontrols { display: flex; align-items: center; gap: 34px; color: #999; height: 20px; padding-right: 5px; }
.wincontrols svg { width: 12px; height: 12px; }

.menubar { display: flex; align-items: center; height: 31px; padding-left: 7px; gap: 11px; background: #f0f0f0; white-space: nowrap; }
.withicon { display: flex; align-items: center; gap: 4px; }
.withicon svg { width: 16px; height: 16px; }
.changes { margin-left: -2px; }
.assistant { margin-left: -4px; }
.caret { flex: none; width: 5px; height: 3px; margin-left: 5px; background: currentColor; clip-path: polygon(0 0, 100% 0, 50% 100%); }
.caret.wide { margin-left: 8px; }
.caret.near { margin-left: 1px; }
.notice { flex: 1; align-self: stretch; display: flex; align-items: center; justify-content: center; color: #176c6c; background: linear-gradient(#f9f9f9, #efefef); border-radius: 4px; margin-left: -4px; }
.account { display: flex; align-items: center; align-self: stretch; gap: 8px; padding-right: 5px; margin-left: -9px; padding-left: 4px; background: linear-gradient(#f9f9f9, #efefef); }
.ic { width: 16px; height: 16px; }
.more { width: 9px; height: 7px; align-self: flex-start; margin-top: 4px; }
.account .more { margin: 5px 0 0 26px; }

.toolrow { display: flex; height: 29px; gap: 1px; }
.toolbar { display: flex; align-items: center; background: linear-gradient(#fdfdfd, #efefef); border-radius: 4px; white-space: nowrap; }
.toolbar button { display: flex; align-items: center; gap: 4px; }
.toolbar svg { width: 16px; height: 16px; }
.toolbar button:disabled { color: #777; }
.toolbar svg.more { width: 9px; height: 7px; }
.toolbar .caret { margin-left: 4px; }
.toolbar .caret.near { margin-left: -2px; }
.files { width: 152px; padding-left: 4px; gap: 7px; flex: none; }
.files .more { margin-left: 10px; }
.vline { width: 1px; height: 24px; background: #9a9a9a; }
.draw { flex: 1; min-width: 0; padding-left: 4px; gap: 7px; }
.sigma { font: bold 15px/16px "Liberation Serif", serif; width: 16px; text-align: center; }
.floor { align-self: flex-start; margin: 2px 0 0 359px; width: 63px; height: 22px; border: 1px solid #777; appearance: none; background: #f4f4f4; }
.view { flex: none; width: 312px; gap: 7px; padding: 0 5px 0 7px; }
.view button .caret { margin-left: 3px; }
.view .more { margin-left: auto; }
.view .vline { height: 16px; background: #aaa; }

.workspace { flex: 1; display: flex; gap: 6px; }
.navigator { display: flex; flex-direction: column; width: 165px; flex: none; padding: 1px 0 1px 0; }
.navigator header { display: flex; align-items: center; gap: 9px; height: 15px; border: 1px solid #8a8a8a; border-left: 0; padding-right: 4px; margin-bottom: 2px; }
.navigator header span { flex: 1; font-size: 13px; line-height: 13px; }
.navigator header svg { width: 9px; height: 9px; }
.section { height: 22px; border: 1px solid #a0a0a0; border-top-color: #fff; background: #f0f0f0; line-height: 20px; }
.expander { height: 26px; padding: 6px 0 0 6px; background: linear-gradient(#fafafa, #efefef); margin-top: 1px; }
.expander svg { width: 40px; height: 16px; }
.navigator .tree { flex: 1; border: 1px solid #828790; background: #fff; margin: 0 1px 1px 2px; padding-top: 1px; overflow: hidden; }
.row { display: flex; align-items: center; height: 16px; white-space: nowrap; line-height: 16px; }
.tree .row { padding-left: 6px; }
.tog { width: 10px; height: 10px; color: #444; }
.dots { width: 4px; margin: 0 1px 0 2px; border-top: 1px dotted #888; }
.row > span { margin-left: 4px; }
.tree ul { background: repeating-linear-gradient(#888 0 1px, transparent 1px 3px) 12px 0 / 1px 100% no-repeat; }
.tree ul.tail { background: none; }
.tree .row.child { padding-left: 31px; }
.branch { position: relative; align-self: stretch; width: 11px; border-left: 1px dotted #888; }
.branch::after { content: ""; position: absolute; left: 0; right: 0; top: 8px; border-top: 1px dotted #888; }
.row.child:last-child .branch { height: 9px; align-self: flex-start; }
.row > .chosen { background: #d9d9d9; }
.new { background: #ffe11a; font: bold 9px/10px "Liberation Sans", sans-serif; margin: -6px 0 0 1px; }

.stage { flex: 1; min-width: 0; display: flex; flex-direction: column; }
.comps { height: 29px; padding-left: 4px; gap: 7px; }
.panes { flex: 1; display: flex; gap: 3px; }
.components { width: 183px; flex: none; display: flex; flex-direction: column; padding-top: 5px; }
.components input { height: 25px; border: 1px solid #7a7a7a; padding-left: 3px; background: #fff; }
.components input::placeholder { color: #777; opacity: 1; }
.components .tree { flex: 1; margin-bottom: 1px; border: 1px solid #828790; border-width: 1px 1px 2px; background: #fff; padding-top: 1px; }
.hot, .hotless { display: flex; align-items: center; gap: 6px; padding: 0 5px; }
.child > .hot, .child > .hotless { margin-left: -2px; }
.hot { background: #316ac5; }
.mini { width: 12px; height: 12px; }
.preview { flex: 1; display: flex; border-right: 1px solid #dcdcdc; margin: 0 3px 1px 0; padding: 24px 1px 3px 0; background: linear-gradient(#dcdcdc, #dcdcdc) 0 20px / 100% 1px no-repeat #fff; }
.dock { flex: 1; display: flex; border: 1px solid #a0a0a0; padding-right: 1px; justify-content: flex-end; }
.figures { width: 269px; display: flex; flex-direction: column; }
figure { flex: 1; display: flex; flex-direction: column; border: 1px solid #444; padding: 1px; background: linear-gradient(#bccbd9, #d8e4f2 26px) content-box #fff; }
figure + figure { border-top: 0; }
figcaption { height: 30px; padding: 12px 0 0 6px; color: #8d9299; font-size: 12px; line-height: 14px; }
figure svg { flex: 1 1 0; height: 0; min-height: 0; margin: 0 6px 6px; background: #000; border: 1px solid #fff; border-right-color: #999; border-bottom-color: #999; }
.dimtext { font: 15px "Liberation Mono", monospace; }
.scroll { width: 15px; display: flex; flex-direction: column; align-items: center; background: #f0f0f0; color: #555; padding: 5px 0 6px; gap: 4px; }
.scroll svg { width: 10px; height: 10px; }
.scroll .up { transform: rotate(180deg); }
.scroll i { width: 15px; height: 272px; background: #cdcdcd; margin-bottom: auto; }

.status { display: flex; gap: 2px; height: 22px; padding-top: 2px; }
.status span, .estatus span { border: 1px solid #d4d4d4; border-left-color: #fff; background: linear-gradient(#fff, #f1f1f1); padding-left: 1px; line-height: 18px; white-space: nowrap; overflow: hidden; }
.c1 { width: 148px; } .c2 { width: 78px; } .c3 { width: 98px; } .c4 { width: 48px; } .c5 { flex: 1; } .c6 { width: 70px; }

.taskbar { display: flex; height: 40px; flex: none; background: linear-gradient(90deg, #000 0 48px, #020d12 400px, #020d12 1296px, #000 1297px); color: #fff; }
.start { width: 48px; display: flex; align-items: center; justify-content: center; }
.start svg { width: 16px; height: 16px; }
.cortana { display: flex; align-items: center; width: 344px; background: #333; padding: 0 14px 0 8px; gap: 6px; }
.ring { width: 22px; height: 22px; border: 3px solid #eee; border-radius: 50%; }
.cortana input { flex: 1; min-width: 0; font-size: 14px; color: #a0a0a0; }
.cortana input::placeholder { color: #9d9d9d; opacity: 1; }
.cortana svg { width: 12px; height: 18px; }
.pins { display: flex; gap: 1px; flex: 1; }
.pins button { width: 48px; display: flex; align-items: center; justify-content: center; border-bottom: 3px solid transparent; background-clip: padding-box; padding-top: 3px; }
.pins svg { width: 24px; height: 24px; }
.pins .apart { margin-left: 5px; }
.pins .running { border-bottom-color: #76b9ed; border-image: linear-gradient(90deg, transparent 4px, #76b9ed 4px 44px, transparent 44px) 3; }
.pins .active { background: #344248; border-bottom-color: #76b9ed; }
.cpu, .clock { display: flex; flex-direction: column; align-items: center; justify-content: center; line-height: 17px; }
.cpu { width: 60px; margin-right: 12px; }
.tray { display: flex; align-items: center; gap: 9px; }
.tray svg { width: 16px; height: 16px; }
.tray .kb { width: 24px; }
.tray b { font-size: 14px; font-weight: 500; }
.clock { width: 80px; margin-left: 6px; }
.center { width: 46px; display: flex; justify-content: center; align-items: center; margin-left: 4px; padding-right: 6px; }
.center svg { width: 26px; height: 26px; margin-top: 2px; }
.count { font-size: 12px; font-weight: bold; }

.editor { position: absolute; left: 308px; right: 307px; top: 59px; bottom: 65px; display: flex; flex-direction: column; background: #f0f0f0; box-shadow: 0 3px 16px rgba(0, 0, 0, .45); }
.editor header { display: flex; align-items: center; height: 30px; padding: 0 1px 0 8px; background: #fff; }
.editor h2 { flex: 1; color: #999; }
.editor header button { width: 19px; height: 19px; background: #e3e3e3; color: #fff; margin-top: 3px; line-height: 16px; }
.etools { display: flex; align-items: center; height: 28px; padding: 0 0 2px 4px; background: linear-gradient(#fdfdfd, #f0f0f0); white-space: nowrap; }
.etools > button { display: flex; align-items: center; gap: 4px; margin-right: 7px; }
.etools > button svg { width: 16px; height: 16px; }
.etools button:disabled { color: #8a8a8a; }
.grip { width: 2px; height: 14px; margin-right: 5px; background: repeating-linear-gradient(#b4b4b4 0 2px, transparent 2px 4px); }
.esep { width: 1px; height: 14px; background: #aaa; margin-right: 5px; }
.offsets .grip { margin-right: 3px; }
.radio { display: flex; align-items: center; gap: 9px; margin-right: 9px; background: #f0f0f0; }
.radio input { appearance: none; width: 11px; height: 11px; border: 1px solid #888; border-radius: 50%; background: #fff; }
.radio input:checked { background: radial-gradient(circle, #111 0 2px, #fff 3px); border-color: #333; }
.offsets > .esep { margin: 0 2px 0 3px; }
.offsets > label[for] { margin-right: 6px; width: 21px; }
.spin { display: flex; width: 78px; height: 23px; border: 1px solid #7a7a7a; background: #fafafa; }
.spin input { flex: 1; min-width: 0; text-align: right; color: #777; }
.spin span { width: 17px; display: flex; flex-direction: column; justify-content: space-around; align-items: center; }
.spin button { width: 5px; height: 3px; background: #555; clip-path: polygon(50% 0, 100% 100%, 0 100%); }
.spin button + button { clip-path: polygon(0 0, 100% 0, 50% 100%); }
.offsets em { font-style: normal; margin: 0 11px 0 6px; width: 22px; }
.canvas { flex: 1 1 0; height: 0; min-height: 0; width: 100%; background: #000; }
.small { font: 12px "Liberation Mono", monospace; }
.big { font: bold 15px "Liberation Mono", monospace; }
.dynamic { height: 28px; padding: 2px; border-bottom: 1px solid #a0a0a0; }
.dynamic button { width: 58px; height: 24px; border: 1px solid #0078d7; background: #dcebf7; }
.actions { display: flex; justify-content: flex-end; height: 42px; padding: 8px 13px 0 0; gap: 15px; border-top: 1px solid #fff; border-bottom: 1px solid #fff; }
.actions button, .buttons button { width: 72px; height: 23px; border: 1px solid #adadad; background: #e1e1e1; }
.actions .w105 { width: 105px; margin-right: 8px; }
.actions .w113 { width: 113px; margin-right: 10px; }
.estatus { position: relative; display: flex; gap: 1px; height: 20px; }
.estatus span:nth-child(-n+2) { width: 149px; }
.estatus span:nth-child(3) { flex: 1; }
.resize { position: absolute; right: 0; bottom: 0; width: 12px; height: 12px; }

.dialog { position: absolute; left: 90px; top: 239px; width: 411px; border: 1px solid #2f8ae6; background: #f0f0f0; box-shadow: 0 4px 16px rgba(0, 0, 0, .4); padding-bottom: 8px; }
.dialog header { display: flex; align-items: center; justify-content: space-between; height: 25px; padding: 0 9px 2px 3px; background: #fff; margin-bottom: 14px; }
.dialog header svg { width: 12px; height: 12px; }
.dialog fieldset { position: relative; height: 66px; margin: 0 13px 7px; border: 1px solid #dcdcdc; padding: 0 9px 7px 7px; }
.dialog legend { padding: 0; margin: 0; height: 16px; line-height: 16px; }
.dialog textarea { display: block; width: 100%; height: 41px; margin-top: 2px; border: 1px solid #7a7a7a; background: #fff; resize: none; outline: 0; padding: 0 2px; line-height: 16px; }
.dialog textarea.active { border-color: #5b7b95; }
.dialog textarea::selection { background: #0078d7; color: #fff; }
.buttons { display: flex; justify-content: flex-end; gap: 15px; padding: 5px 14px 0 0; }

.ime { position: absolute; right: 211px; top: 3px; display: flex; align-items: center; gap: 6px; height: 24px; padding: 0 4px 0 31px; background: #fff; border: 1px solid #b8cadb; color: #1b70c4; font-size: 14px; }
.ime svg { width: 16px; height: 16px; }
.ime .badge { position: absolute; left: -1px; top: -4px; width: 28px; height: 28px; }
.ball { position: absolute; right: 142px; top: 0; width: 52px; height: 26px; filter: drop-shadow(0 2px 2px rgba(0, 0, 0, .35)); font: bold 12px "Noto Sans", sans-serif; }
.marks { position: absolute; left: 0; top: 0; pointer-events: none; }
</style>
